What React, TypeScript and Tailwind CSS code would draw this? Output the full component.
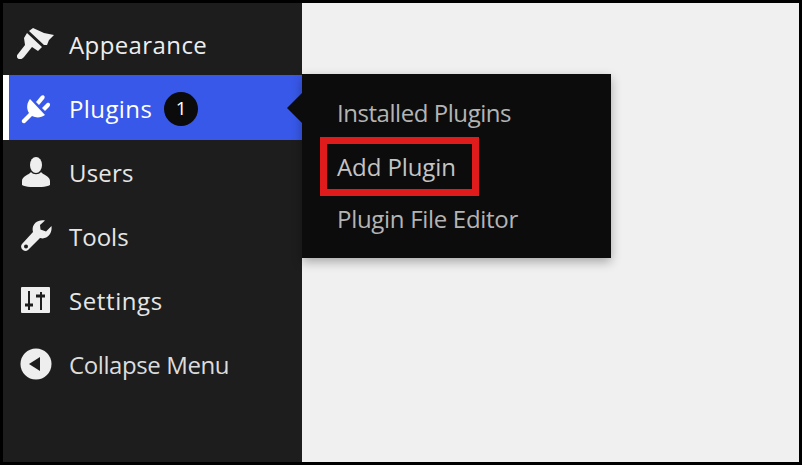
const font = { fontFamily: '"Open Sans", "Noto Sans", sans-serif' };

const BrushIcon = () => (
  <svg viewBox="0 0 37 31" className="h-[31px] w-[37px] fill-[#eeeeee]">
    <path d="M12 3 L16 0 L27 5 L37 7 L32 12 L30 17 L27 17 Z" />
    <path d="M10 5 L25 19 L21 23 L15 19 L7 29 C5 31 3 32 2 31 C0 30 -1 28 1 26 L8 17 L7 10 Z" />
  </svg>
);

const PlugIcon = () => (
  <svg viewBox="0 0 30 30" className="h-[30px] w-[30px] fill-[#ffffff]">
    <path d="M9 5 L24 21 C20 24 15 24 11 22 L4 29 C2 30 0 28 1 26 L8 19 C5 14 6 9 9 5 Z" />
    <path d="M15 8 L20 2 C22 0 25 2 23 5 L18 11 Z" />
    <path d="M21 14 L26 9 C29 8 30 11 28 13 L24 17 Z" />
  </svg>
);

const UserIcon = () => (
  <svg viewBox="0 0 30 30" className="h-[30px] w-[30px] fill-[#eeeeee]">
    <ellipse cx="15" cy="8" rx="6" ry="8" />
    <path d="M10 15 C8 18 1 19 1 24 L1 28 C6 31 24 31 29 28 L29 24 C29 19 22 18 20 15 C18 18 12 18 10 15 Z" />
  </svg>
);

const WrenchIcon = () => (
  <svg viewBox="0 0 32 32" className="h-8 w-8 fill-[#eeeeee]">
    <path
      fillRule="evenodd"
      d="M25 0.5 C17 -1 11 5 13 12 L2 24 C-1 28 4 33 8 30 L20 18 C27 20 32.5 14 31.5 6 L26 11.5 L20.5 9.5 L20 5 Z M6 24.5 A2 2 0 1 0 6 28.5 A2 2 0 1 0 6 24.5 Z"
    />
  </svg>
);

const SettingsIcon = () => (
  <svg viewBox="0 0 29 26" className="h-[26px] w-[29px]">
    <rect width="29" height="26" rx="1" fill="#eeeeee" />
    <path d="M4 16.5 H12 V19.5 H4 Z M7 4 H9 V23 H7 Z" fill="#1d1d1d" />
    <path d="M15 7.5 H24 V10.5 H15 Z M19 5 H21 V23 H19 Z" fill="#1d1d1d" />
  </svg>
);

const CollapseIcon = () => (
  <svg viewBox="0 0 32 32" className="h-8 w-8">
    <circle cx="16" cy="16" r="15.5" fill="#eeeeee" />
    <path d="M20 9 V23 L9 16 Z" fill="#1d1d1d" />
  </svg>
);

type Item = { label: string; icon: React.ReactNode; text: string };

const ITEMS_TOP: Item[] = [
  { label: 'Appearance', icon: <BrushIcon />, text: 'text-[#eeeeee] tracking-[0.4px] pt-[4px]' },
];

const ITEMS_BOTTOM: Item[] = [
  { label: 'Users', icon: <UserIcon />, text: 'text-[#e6e6e6] tracking-[0.2px] pt-[2px]' },
  { label: 'Tools', icon: <WrenchIcon />, text: 'text-[#e6e6e6] pt-[2px]' },
  { label: 'Settings', icon: <SettingsIcon />, text: 'text-[#e6e6e6] tracking-[0.6px] pt-[2px]' },
  { label: 'Collapse Menu', icon: <CollapseIcon />, text: 'text-[#dcdcdc] tracking-[-0.4px] pt-[2px]' },
];

const MenuRow = ({ item }: { item: Item }) => (
  <div className="flex h-16 items-center">
    <div className="flex w-[66px] shrink-0 justify-center pr-[1px]">{item.icon}</div>
    <span className={`text-[24px] leading-none ${item.text}`}>{item.label}</span>
  </div>
);

export default function App() {
  return (
    <div className="h-[466px] w-[803px] bg-white" style={font}>
      <div className="relative flex h-[465px] w-[802px] border-[3px] border-black bg-[#f0f0f0]">
        <aside className="w-[299px] bg-[#1d1d1d] pt-[8px]">
          {ITEMS_TOP.map((item) => (
            <MenuRow key={item.label} item={item} />
          ))}
          <div className="flex h-[65px] items-center border-l-[6px] border-white bg-[#3858e9] pt-[2px]">
            <div className="flex w-[60px] shrink-0 justify-center pr-[7px]">
              <PlugIcon />
            </div>
            <span className="text-[24px] leading-none tracking-[0.4px] text-[#ffffff]">Plugins</span>
            <span className="ml-[12px] flex h-[34px] w-[34px] items-center justify-center rounded-full bg-[#0b0b0b] text-[19px] text-white">
              1
            </span>
          </div>
          {ITEMS_BOTTOM.map((item) => (
            <MenuRow key={item.label} item={item} />
          ))}
        </aside>

        {/* flyout submenu */}
        <div className="absolute top-[71px] left-[299px] flex h-[184px] w-[309px] flex-col bg-[#0c0c0c] pt-[10px] pl-[35px] shadow-[0_4px_10px_rgba(0,0,0,0.3)]">
          <div className="absolute top-[19px] -left-[15px] h-0 w-0 border-y-[15px] border-r-[15px] border-y-transparent border-r-[#0c0c0c]" />
          <div className="flex h-[58px] items-center text-[24px] leading-none tracking-[-0.45px] text-[#b4b4b4]">
            Installed Plugins
          </div>
          <div className="relative flex h-[50px] items-center text-[24px] leading-none tracking-[-0.1px] text-[#c4c4c4]">
            Add Plugin
            <div className="absolute -top-[5px] -left-[17px] h-[59px] w-[159px] border-[7px] border-[#e01b1b]" />
          </div>
          <div className="flex h-[54px] items-center text-[24px] leading-none tracking-[-0.3px] text-[#b4b4b4]">
            Plugin File Editor
          </div>
        </div>
      </div>
    </div>
  );
}
